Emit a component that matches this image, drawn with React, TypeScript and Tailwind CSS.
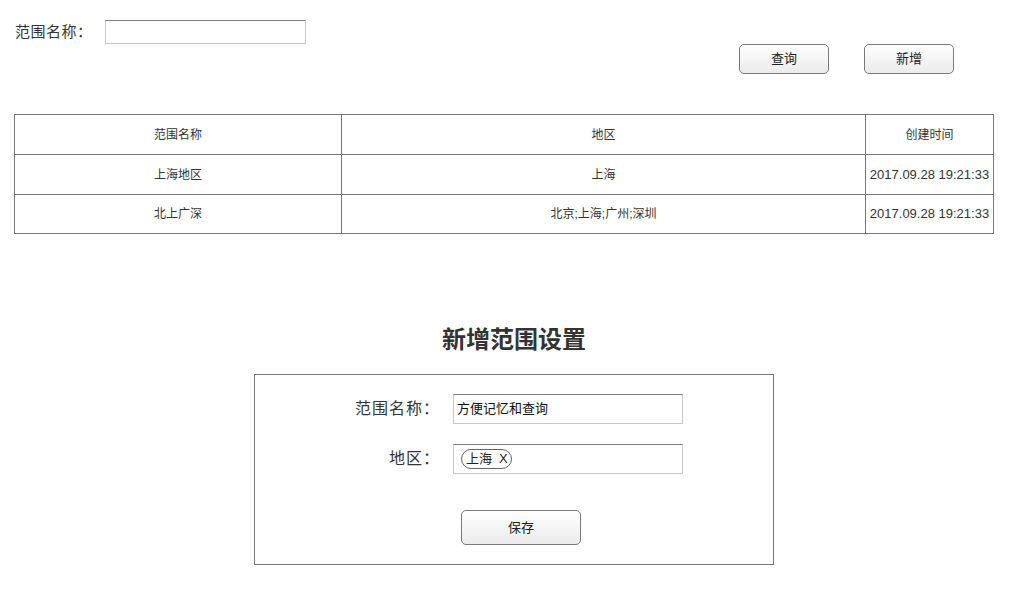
import React from "react";

const font = { fontFamily: '"Liberation Sans", "Noto Sans CJK SC", sans-serif' };

function Btn({ children, cls }: { children: React.ReactNode; cls: string }) {
  return (
    <button
      className={`flex items-center justify-center rounded-[5px] border border-[#7a7a7a] bg-gradient-to-b from-[#ffffff] to-[#ebebeb] text-[13px] text-[#222] ${cls}`}
    >
      {children}
    </button>
  );
}

const rows = [
  { name: "上海地区", area: "上海", time: "2017.09.28 19:21:33" },
  { name: "北上广深", area: "北京;上海;广州;深圳", time: "2017.09.28 19:21:33" },
];

export default function App() {
  return (
    <div style={font} className="w-[1022px] h-[600px] bg-white text-[#333] overflow-hidden">
      <div className="flex items-center pt-[20px] pl-[15px]">
        <span className="w-[90px] text-[15px] leading-[24px] text-[#333] tracking-[0.5px]">范围名称：</span>
        <div className="w-[201px] h-[24px] border border-[#c8c8c8] border-t-[#808080]" />
      </div>
      <div className="flex justify-end gap-[35px] pr-[68px]">
        <Btn cls="w-[90px] h-[30px]">查询</Btn>
        <Btn cls="w-[90px] h-[30px]">新增</Btn>
      </div>
      <div className="mt-[40px] ml-[14px] w-[980px] border border-[#777] text-[12px] text-[#333]">
        <div className="grid grid-cols-[327px_524px_1fr] h-[39px] items-stretch">
          <div className="flex items-center justify-center border-r border-[#777]">范围名称</div>
          <div className="flex items-center justify-center border-r border-[#777]">地区</div>
          <div className="flex items-center justify-center">创建时间</div>
        </div>
        {rows.map((r, i) => (
          <div
            key={r.name}
            className={`grid grid-cols-[327px_524px_1fr] border-t border-[#777] ${i === rows.length - 1 ? "h-[39px]" : "h-[40px]"}`}
          >
            <div className="flex items-center justify-center border-r border-[#777]">{r.name}</div>
            <div className="flex items-center justify-center border-r border-[#777]">{r.area}</div>
            <div className="flex items-center justify-center text-[13px]">{r.time}</div>
          </div>
        ))}
      </div>
      <div className="mt-[90px] pl-[6px] text-center text-[24px] font-bold leading-[32px] text-[#333]">新增范围设置</div>
      <div className="mt-[18px] ml-[254px] w-[520px] h-[191px] border border-[#777] pt-[19px]">
        <div className="flex items-center">
          <div className="w-[185px] text-right text-[16px] text-[#333] tracking-[1px]">范围名称：</div>
          <div className="ml-[13px] w-[230px] h-[30px] flex items-center pl-[3px] border border-[#c8c8c8] border-t-[#808080] text-[13px] text-[#111]">
            方便记忆和查询
          </div>
        </div>
        <div className="flex items-center mt-[20px]">
          <div className="w-[185px] text-right text-[16px] text-[#333] tracking-[1px]">地区：</div>
          <div className="ml-[13px] w-[230px] h-[30px] flex items-center pl-[7px] border border-[#c8c8c8] border-t-[#808080]">
            <span className="flex items-center h-[20px] w-[51px] rounded-full border border-[#666] pl-[4px] text-[13px] text-[#222]">
              上海<span className="ml-[7px]">X</span>
            </span>
          </div>
        </div>
        <div className="mt-[36px] pl-[206px]">
          <Btn cls="w-[120px] h-[35px]">保存</Btn>
        </div>
      </div>
    </div>
  );
}
